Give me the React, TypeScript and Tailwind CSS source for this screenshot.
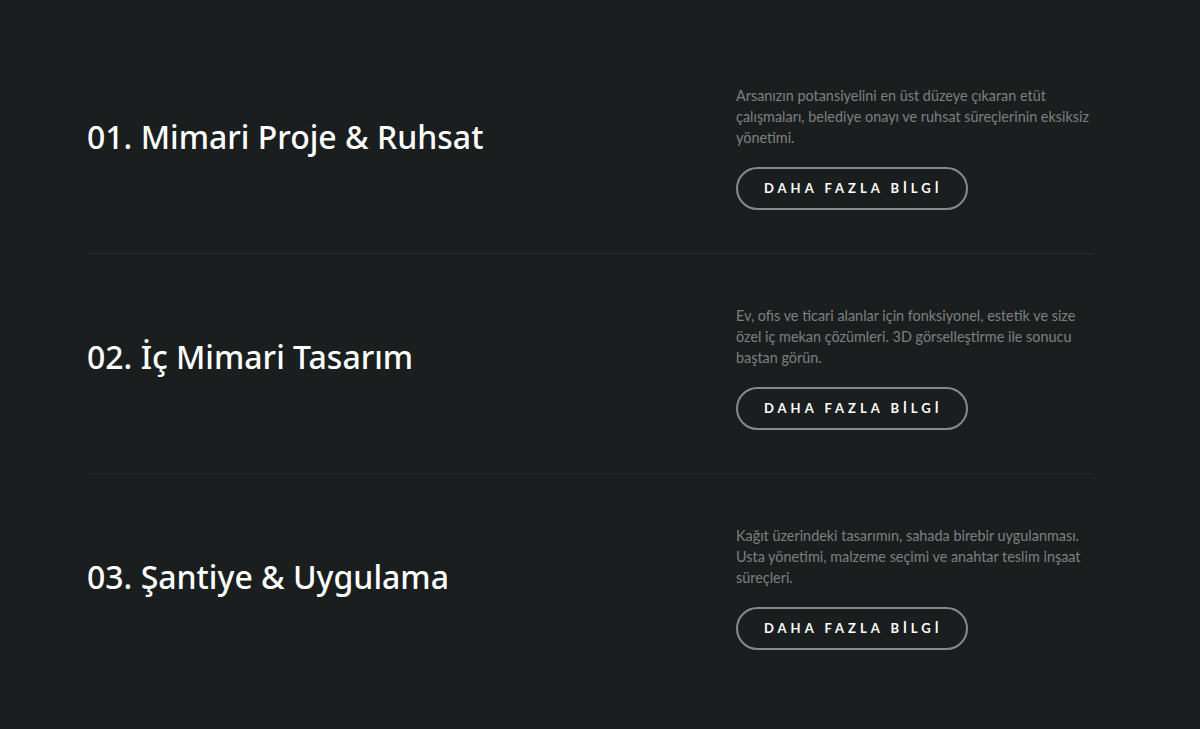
const services = [
  {
    title: "01. Mimari Proje & Ruhsat",
    text: "Arsanızın potansiyelini en üst düzeye çıkaran etüt çalışmaları, belediye onayı ve ruhsat süreçlerinin eksiksiz yönetimi.",
  },
  {
    title: "02. İç Mimari Tasarım",
    text: "Ev, ofis ve ticari alanlar için fonksiyonel, estetik ve size özel iç mekan çözümleri. 3D görselleştirme ile sonucu baştan görün.",
  },
  {
    title: "03. Şantiye & Uygulama",
    text: "Kağıt üzerindeki tasarımın, sahada birebir uygulanması. Usta yönetimi, malzeme seçimi ve anahtar teslim inşaat süreçleri.",
  },
]

function ServiceRow({ title, text, last }: { title: string; text: string; last: boolean }) {
  return (
    <div
      className={`grid grid-cols-[649px_356px] items-center pt-[51px] pb-[43px] ${
        last ? "" : "border-b border-[#242829]"
      }`}
    >
      <h2 className="mb-[22px] font-['Noto_Sans',sans-serif] text-[32px] font-medium leading-[40px] text-white">
        {title}
      </h2>
      <div>
        <p className="font-['Lato',sans-serif] text-[14.4px] leading-[21px] text-[#7c8181]">{text}</p>
        <button className="mt-[19px] h-[43px] rounded-full border-2 border-[#858a8a] pl-[26px] pr-[23px] font-['Lato',sans-serif] text-[13px] font-bold tracking-[4px] text-white">
          DAHA FAZLA BİLGİ
        </button>
      </div>
    </div>
  )
}

export default function App() {
  return (
    <div className="min-h-[729px] w-full bg-[#1b1e1f] pt-[34px] pl-[87px]">
      <div className="w-[1005px]">
        {services.map((s, i) => (
          <ServiceRow key={i} title={s.title} text={s.text} last={i === services.length - 1} />
        ))}
      </div>
    </div>
  )
}
